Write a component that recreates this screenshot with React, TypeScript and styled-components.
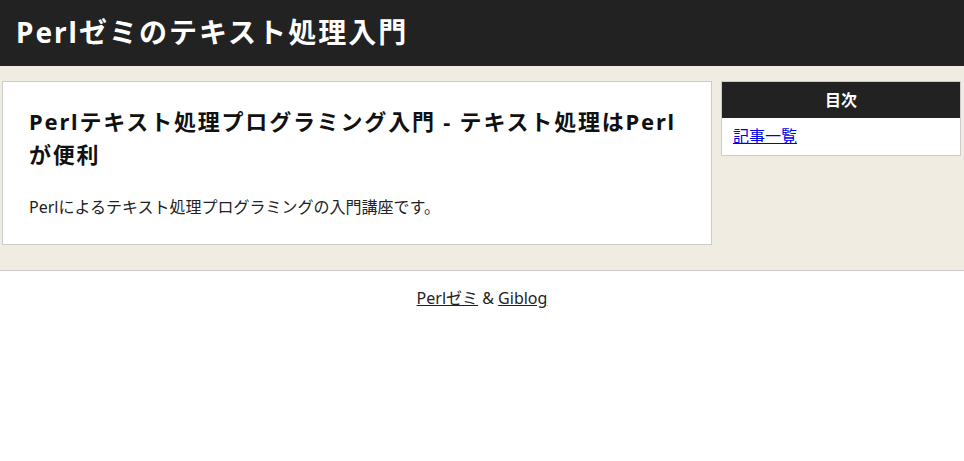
import React from "react";
import styled, { createGlobalStyle } from "styled-components";

const Global = createGlobalStyle`
  html, body { margin: 0; padding: 0; background: #fff; }
  body {
    font-family: "Noto Sans", "Noto Sans CJK JP", sans-serif;
    font-size: 16px;
    line-height: 1.5;
    color: #222;
  }
  * { box-sizing: border-box; }
`;

const Header = styled.header`
  background: #222;
  height: 66px;
  display: flex;
  align-items: center;
  padding: 0 16px;
`;

const SiteTitle = styled.h1`
  margin: 0;
  font-size: 28px;
  font-weight: bold;
  color: #fff;
  line-height: 1.2;
  letter-spacing: 2px;
`;

const Container = styled.div`
  background: #f0ece2;
  display: flex;
  align-items: flex-start;
  gap: 9px;
  padding: 15px 3px 25px 2px;
  border-bottom: 1px solid #ccc;
`;

const Main = styled.main`
  flex: 1;
  background: #fff;
  border: 1px solid #ccc;
  padding: 23px 26px 25px 26px;
`;

const ArticleTitle = styled.h2`
  margin: 0 0 24px;
  font-size: 22px;
  font-weight: bold;
  line-height: 1.5;
  color: #111;
  letter-spacing: 1.8px;
`;

const Paragraph = styled.p`
  margin: 0;
`;

const Side = styled.aside`
  width: 240px;
  flex: none;
  background: #fff;
  border: 1px solid #ccc;
`;

const SideHead = styled.div`
  background: #222;
  color: #fff;
  font-weight: bold;
  height: 36px;
  display: flex;
  align-items: center;
  justify-content: center;
`;

const SideBody = styled.div`
  padding: 6px 11px 7px 11px;
`;

const SideLink = styled.a`
  color: #0000ee;
  text-decoration: underline;
`;

const Footer = styled.footer`
  text-align: center;
  padding: 15px 0;
`;

const FooterLink = styled.a`
  color: #222;
  text-decoration: underline;
`;

export default function App() {
  return (
    <>
      <Global />
      <Header>
        <SiteTitle>Perlゼミのテキスト処理入門</SiteTitle>
      </Header>
      <Container>
        <Main>
          <ArticleTitle>Perlテキスト処理プログラミング入門 - テキスト処理はPerlが便利</ArticleTitle>
          <Paragraph>Perlによるテキスト処理プログラミングの入門講座です。</Paragraph>
        </Main>
        <Side>
          <SideHead>目次</SideHead>
          <SideBody>
            <SideLink href="#">記事一覧</SideLink>
          </SideBody>
        </Side>
      </Container>
      <Footer>
        <FooterLink href="#">Perlゼミ</FooterLink> &amp; <FooterLink href="#">Giblog</FooterLink>
      </Footer>
    </>
  );
}
